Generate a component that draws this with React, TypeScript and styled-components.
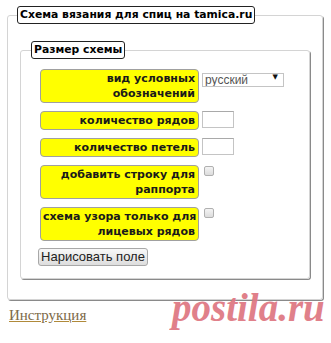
import React from "react";
import styled, { createGlobalStyle } from "styled-components";

const GlobalStyle = createGlobalStyle`
  body {
    margin: 0;
    background: #ffffff;
    font-family: "DejaVu Sans", Verdana, sans-serif;
  }
`;

const rows = [
  { label: ["вид условных", "обозначений"], control: "select" },
  { label: ["количество рядов"], control: "text" },
  { label: ["количество петель"], control: "text" },
  { label: ["добавить строку для", "раппорта"], control: "check" },
  { label: ["схема узора только для", "лицевых рядов"], control: "check" },
];

export default function App() {
  return (
    <Page>
      <GlobalStyle />
      <OuterSet>
        <Legend>Схема вязания для спиц на tamica.ru</Legend>
        <InnerSet>
          <Legend>Размер схемы</Legend>
          <Rows>
            {rows.map((row, index) => (
              <Row key={index}>
                <Label>
                  {row.label.map((line) => (
                    <div key={line}>{line}</div>
                  ))}
                </Label>
                {row.control === "select" && (
                  <SelectWrap>
                    <Select defaultValue="ru">
                      <option value="ru">русский</option>
                    </Select>
                    <Arrow>▼</Arrow>
                  </SelectWrap>
                )}
                {row.control === "text" && <TextInput type="text" />}
                {row.control === "check" && <CheckBox type="checkbox" />}
              </Row>
            ))}
          </Rows>
          <DrawButton>Нарисовать поле</DrawButton>
        </InnerSet>
      </OuterSet>
      <Footer>
        <Link href="#">Инструкция</Link>
        <Watermark>postila.ru</Watermark>
      </Footer>
    </Page>
  );
}

const Page = styled.div`
  width: 331px;
  padding: 6px 0 0 7px;
  box-sizing: border-box;
`;

const OuterSet = styled.fieldset`
  width: 316px;
  height: 294px;
  box-sizing: border-box;
  margin: 0;
  padding: 0 0 0 9px;
  border: 1px solid #d4d4d4;
  border-radius: 3px;
  box-shadow: 1px 1px 0 #8a8a8a;
`;

const InnerSet = styled.fieldset`
  width: 290px;
  height: 238px;
  box-sizing: border-box;
  margin: 17px 0 0 3px;
  padding: 0 0 0 10px;
  border: 1px solid #d4d4d4;
  border-radius: 3px;
  box-shadow: 1px 1px 0 #8a8a8a;
`;

const Legend = styled.legend`
  padding: 0 2px;
  height: 18px;
  box-sizing: border-box;
  border: 1px solid #222;
  border-radius: 3px;
  font-size: 10.8px;
  font-weight: bold;
  line-height: 16px;
  color: #000;
`;

const Rows = styled.div`
  display: flex;
  flex-direction: column;
  gap: 8px;
  padding: 10px 0 0 9px;
`;

const Row = styled.div`
  display: flex;
  align-items: flex-start;
  gap: 3px;
`;

const Label = styled.div`
  width: 159px;
  box-sizing: border-box;
  padding: 1px 3px 1px 2px;
  background: #ffff00;
  border: 1px solid #a0a0a0;
  border-radius: 4px;
  text-align: right;
  white-space: nowrap;
  font-size: 11px;
  font-weight: bold;
  line-height: 15px;
  color: #1a1a1a;
`;

const SelectWrap = styled.div`
  position: relative;
  width: 82px;
  height: 14px;
`;

const Select = styled.select`
  appearance: none;
  width: 82px;
  height: 14px;
  box-sizing: border-box;
  margin: 0;
  padding: 0 0 0 2px;
  border: 1px solid #c4c4c4;
  border-radius: 0;
  background: #fff;
  font-family: "Liberation Sans", Arial, sans-serif;
  font-size: 12px;
  line-height: 12px;
  color: #555;
`;

const Arrow = styled.span`
  position: absolute;
  right: 6px;
  top: 4px;
  font-size: 7px;
  line-height: 8px;
  color: #111;
  pointer-events: none;
`;

const TextInput = styled.input`
  width: 32px;
  height: 17px;
  box-sizing: border-box;
  margin: 0;
  padding: 0;
  border: 1px solid #c4c4c4;
  border-top-color: #a9a9a9;
`;

const CheckBox = styled.input`
  appearance: none;
  width: 10px;
  height: 10px;
  margin: 1px 0 0 2px;
  border: 1px solid #b0b0b0;
  border-radius: 2px;
  background: linear-gradient(#f4f4f4, #dcdcdc);
`;

const DrawButton = styled.button`
  display: block;
  width: 110px;
  height: 18px;
  margin: 7px 0 0 7px;
  padding: 0;
  border: 1px solid #a8a8a8;
  border-radius: 3px;
  background: linear-gradient(#f8f8f8, #dddddd);
  font-family: "Liberation Sans", Arial, sans-serif;
  font-size: 13px;
  line-height: 16px;
  color: #222;
`;

const Footer = styled.div`
  position: relative;
  height: 40px;
  padding: 5px 0 0 2px;
`;

const Link = styled.a`
  font-family: "Liberation Serif", "Times New Roman", serif;
  font-size: 15px;
  color: #7d6a48;
  text-decoration: underline;
  text-decoration-color: #b08a3a;
`;

const Watermark = styled.span`
  position: absolute;
  left: 165px;
  top: -15px;
  font-family: "Liberation Serif", serif;
  font-style: italic;
  font-weight: bold;
  font-size: 39px;
  color: #df7a84;
  opacity: 0.95;
`;
